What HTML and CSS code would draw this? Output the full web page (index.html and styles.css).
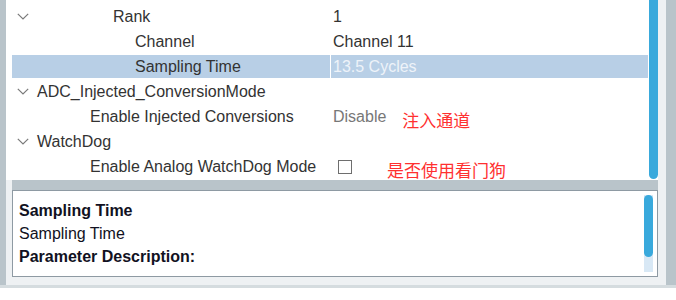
FILE: index.html
```html
<!DOCTYPE html>
<html lang="en">
<head>
    <meta charset="UTF-8">
    <title>ADC Parameter Settings</title>
    <link rel="stylesheet" href="styles.css">
</head>
<body>
    <div class="window">
        <div class="side-left"></div>
        <div class="main">
            <div class="tree-wrap">
                <div class="tree">
                    <div class="rows">
                        <div class="row">
                            <div class="name"><span class="twisty"></span><span class="label lv1">External Trigger Conversion Source</span></div>
                            <div class="value">Regular Conversion launched by software</div>
                        </div>
                        <div class="row">
                            <div class="name"><span class="twisty"><svg width="12" height="7" viewBox="0 0 12 7"><polyline points="0.8,0.8 6,6 11.2,0.8" fill="none" stroke="#7a7a7a" stroke-width="1.2"/></svg></span><span class="label lv2">Rank</span></div>
                            <div class="value">1</div>
                        </div>
                        <div class="row">
                            <div class="name"><span class="twisty"></span><span class="label lv3">Channel</span></div>
                            <div class="value">Channel 11</div>
                        </div>
                        <div class="row selected">
                            <div class="name"><span class="twisty"></span><span class="label lv3">Sampling Time</span></div>
                            <div class="value">13.5 Cycles</div>
                        </div>
                        <div class="row">
                            <div class="name"><span class="twisty"><svg width="12" height="7" viewBox="0 0 12 7"><polyline points="0.8,0.8 6,6 11.2,0.8" fill="none" stroke="#7a7a7a" stroke-width="1.2"/></svg></span><span class="label lv0">ADC_Injected_ConversionMode</span></div>
                            <div class="value"></div>
                        </div>
                        <div class="row">
                            <div class="name"><span class="twisty"></span><span class="label lv1">Enable Injected Conversions</span></div>
                            <div class="value"><span class="disabled">Disable</span><span class="note note-inj">注入通道</span></div>
                        </div>
                        <div class="row">
                            <div class="name"><span class="twisty"><svg width="12" height="7" viewBox="0 0 12 7"><polyline points="0.8,0.8 6,6 11.2,0.8" fill="none" stroke="#7a7a7a" stroke-width="1.2"/></svg></span><span class="label lv0">WatchDog</span></div>
                            <div class="value"></div>
                        </div>
                        <div class="row">
                            <div class="name"><span class="twisty"></span><span class="label lv1">Enable Analog WatchDog Mode</span></div>
                            <div class="value"><span class="checkbox"></span><span class="note note-wd">是否使用看门狗</span></div>
                        </div>
                    </div>
                </div>
                <div class="vscroll"><div class="thumb"></div></div>
            </div>

            <div class="splitter"></div>

            <div class="desc">
                <div class="desc-text">
                    <div class="desc-title">Sampling Time</div>
                    <div>Sampling Time</div>
                    <div class="desc-title">Parameter Description:</div>
                </div>
                <div class="desc-scroll"><div class="thumb"></div></div>
            </div>
        </div>
        <div class="side-right"></div>
    </div>
    <div class="footer"></div>
</body>
</html>
```

FILE: styles.css
```css
body {
    margin: 0;
    background: #ffffff;
    font-family: "Liberation Sans", Arial, sans-serif;
    font-size: 16px;
    overflow: hidden;
}

.window {
    display: flex;
    height: 285px;
    background: #eef1f3;
}

.side-left {
    width: 6px;
    background: #b9c4ca;
}

.side-right {
    width: 10px;
    margin-left: 8px;
    background: #b9c4ca;
}

.main {
    width: 652px;
    display: flex;
    flex-direction: column;
}

/* property tree */
.tree-wrap {
    display: flex;
    height: 180px;
    background: #ffffff;
}

.tree {
    width: 636px;
    flex: none;
    padding-left: 6px;
    overflow: hidden;
}

.rows {
    margin-top: -21px;
}

.row {
    display: grid;
    grid-template-columns: 318px 317px;
    column-gap: 1px;
    height: 25px;
    color: #333333;
}

.name, .value {
    display: flex;
    align-items: center;
    white-space: nowrap;
}

.name {
    overflow: hidden;
}

.value {
    padding-left: 2px;
}

.row.selected .name,
.row.selected .value {
    background: #b8cfe6;
    margin: 1px 0;
}

.row.selected .value {
    color: #eef3f9;
}

.twisty {
    width: 25px;
    flex: none;
    display: flex;
    align-items: center;
    padding-left: 5px;
    box-sizing: border-box;
}

.lv0 { padding-left: 0; }
.lv1 { padding-left: 53px; }
.lv2 { padding-left: 76px; }
.lv3 { padding-left: 98px; }

.disabled {
    color: #777777;
}

.checkbox {
    width: 12px;
    height: 12px;
    margin-left: 5px;
    border: 1.5px solid #6e6e6e;
    background: #ffffff;
}

.note {
    font-family: "Noto Sans CJK SC", sans-serif;
    font-size: 17px;
    line-height: 1;
    color: #ff3030;
    margin-top: 6px;
}

.note-inj { margin-left: 16px; }
.note-wd { margin-left: 35px; }

.vscroll {
    width: 9px;
    flex: none;
    margin-left: 1px;
}

.vscroll .thumb {
    height: 179px;
    background: #39a9dc;
    border-radius: 0 0 4.5px 4.5px;
}

.splitter {
    height: 10px;
    margin-left: 6px;
    background: #b9c4ca;
}

/* description box */
.desc {
    display: flex;
    height: 85px;
    margin-left: 6px;
    border: 1px solid #8e9aa3;
    background: #ffffff;
}

.desc-text {
    flex: 1;
    padding: 8px 0 0 6px;
    line-height: 23px;
    color: #111122;
}

.desc-title {
    font-weight: bold;
}

.desc-scroll {
    width: 9px;
    margin: 4px 4px 4px 0;
    background: #d8e8f5;
}

.desc-scroll .thumb {
    height: 62px;
    background: #39a9dc;
    border-radius: 4.5px;
}

.footer {
    height: 12px;
    border-top: 3px solid #d5dcdf;
    border-bottom: 1px solid #e6e8e9;
}
```
